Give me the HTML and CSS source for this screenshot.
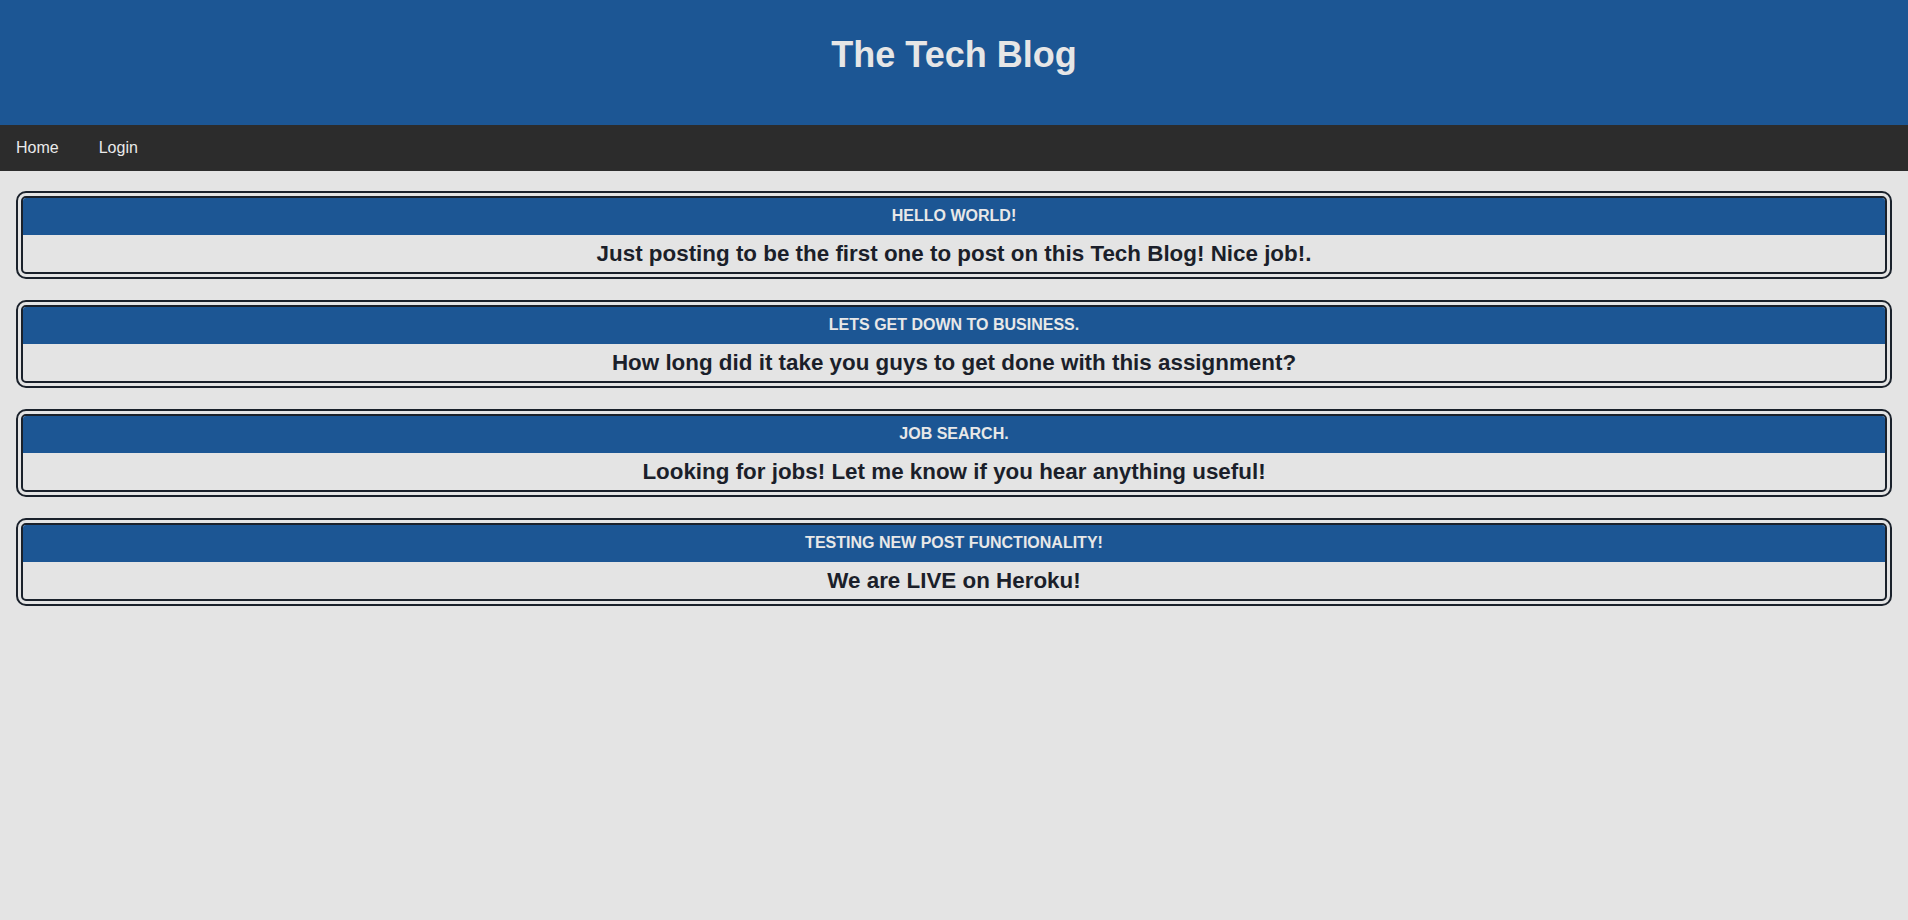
FILE: index.html
```html
<!DOCTYPE html>
<html lang="en">
<head>
<meta charset="utf-8">
<title>The Tech Blog</title>
<link rel="stylesheet" href="styles.css">
</head>
<body>
<header class="site-header">
  <h1 class="site-title">The Tech Blog</h1>
</header>
<nav class="site-nav">
  <a class="nav-link" href="#">Home</a>
  <a class="nav-link" href="#">Login</a>
</nav>
<main class="posts">
  <article class="post">
    <div class="post-title">HELLO WORLD!</div>
    <div class="post-body">Just posting to be the first one to post on this Tech Blog! Nice job!.</div>
  </article>
  <article class="post">
    <div class="post-title">LETS GET DOWN TO BUSINESS.</div>
    <div class="post-body">How long did it take you guys to get done with this assignment?</div>
  </article>
  <article class="post">
    <div class="post-title">JOB SEARCH.</div>
    <div class="post-body">Looking for jobs! Let me know if you hear anything useful!</div>
  </article>
  <article class="post">
    <div class="post-title">TESTING NEW POST FUNCTIONALITY!</div>
    <div class="post-body">We are LIVE on Heroku!</div>
  </article>
</main>
</body>
</html>
```

FILE: styles.css
```css
* { box-sizing: border-box; }

body {
  margin: 0;
  background: #e4e4e4;
  font-family: "Liberation Sans", Arial, sans-serif;
  color: #1b1f2a;
}

.site-header {
  height: 125px;
  background: #1c5694;
  padding-top: 34px;
}

.site-title {
  margin: 0;
  text-align: center;
  font-size: 36px;
  line-height: 41px;
  font-weight: bold;
  color: #e6e6e6;
}

.site-nav {
  height: 46px;
  background: #2c2c2c;
  padding: 14px 16px;
  display: flex;
  gap: 40px;
}

.nav-link {
  color: #eaeaea;
  text-decoration: none;
  font-size: 16px;
  line-height: 18px;
}

.posts {
  padding: 20px 16px;
  display: flex;
  flex-direction: column;
  gap: 21px;
}

.post {
  border: 7px double #1a212b;
  border-radius: 10px;
  overflow: hidden;
}

.post-title {
  height: 37px;
  padding-bottom: 1px;
  background: #1c5694;
  color: #e8e8e8;
  font-size: 16px;
  font-weight: bold;
  text-align: center;
  display: flex;
  align-items: center;
  justify-content: center;
}

.post-body {
  height: 37px;
  font-size: 22.4px;
  font-weight: bold;
  text-align: center;
  display: flex;
  align-items: center;
  justify-content: center;
}
```
